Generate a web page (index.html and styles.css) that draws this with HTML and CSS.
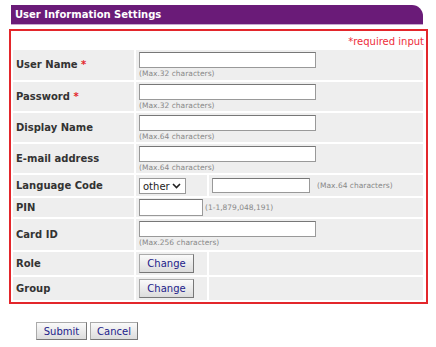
FILE: index.html
```html
<!DOCTYPE html>
<html lang="en">
<head>
  <meta charset="UTF-8" />
  <title>User Information Settings</title>
  <link rel="stylesheet" href="styles.css">
</head>
<body>
  <div class="page">
    <div class="title-bar">User Information Settings</div>
    <div class="form-box">
      <div class="required-note">*required input</div>
      <table class="settings">
        <tr class="tall first-row">
          <th>User Name <span class="req">*</span></th>
          <td colspan="2">
            <input type="text" class="field">
            <div class="hint">(Max.32 characters)</div>
          </td>
        </tr>
        <tr class="tall">
          <th>Password <span class="req">*</span></th>
          <td colspan="2">
            <input type="password" class="field">
            <div class="hint">(Max.32 characters)</div>
          </td>
        </tr>
        <tr class="tall">
          <th>Display Name</th>
          <td colspan="2">
            <input type="text" class="field">
            <div class="hint">(Max.64 characters)</div>
          </td>
        </tr>
        <tr class="tall">
          <th>E-mail address</th>
          <td colspan="2">
            <input type="text" class="field">
            <div class="hint">(Max.64 characters)</div>
          </td>
        </tr>
        <tr class="short">
          <th>Language Code</th>
          <td class="col-mid">
            <span class="select-wrap">
              <select class="lang">
                <option>other</option>
              </select>
              <svg class="chevron" width="9" height="6" viewBox="0 0 9 6"><path d="M1 1 L4.5 4.5 L8 1" fill="none" stroke="#222" stroke-width="1.6"/></svg>
            </span>
          </td>
          <td class="col-last">
            <input type="text" class="field field-mid">
            <span class="hint inline">(Max.64 characters)</span>
          </td>
        </tr>
        <tr class="short pin-row">
          <th>PIN</th>
          <td colspan="2">
            <input type="text" class="field field-pin"><span class="hint inline">(1-1,879,048,191)</span>
          </td>
        </tr>
        <tr class="tall card-row">
          <th>Card ID</th>
          <td colspan="2">
            <input type="text" class="field">
            <div class="hint">(Max.256 characters)</div>
          </td>
        </tr>
        <tr class="btn-row">
          <th>Role</th>
          <td class="col-mid"><button type="button" class="btn">Change</button></td>
          <td class="col-last"></td>
        </tr>
        <tr class="btn-row">
          <th>Group</th>
          <td class="col-mid"><button type="button" class="btn">Change</button></td>
          <td class="col-last"></td>
        </tr>
      </table>
    </div>
    <div class="actions">
      <button type="submit" class="btn btn-submit">Submit</button>
      <button type="button" class="btn btn-cancel">Cancel</button>
    </div>
  </div>
</body>
</html>
```

FILE: styles.css
```css
:root {
  --purple: #6a1b78;
  --red: #e3262b;
  --cell-bg: #eeeeee;
  --label-color: #333;
  --hint-color: #888;
}

* {
  box-sizing: border-box;
  margin: 0;
  padding: 0;
}

body {
  font-family: 'DejaVu Sans', Verdana, sans-serif;
  background: #fff;
  color: var(--label-color);
}

.page {
  padding: 5px 8px 0 9px;
}

.title-bar {
  margin: 0 5px 0 2px;
  height: 20px;
  background: var(--purple);
  color: #fff;
  font-size: 10px;
  font-weight: bold;
  line-height: 19px;
  padding-left: 4px;
  border-top-right-radius: 11px;
  border-bottom: 1px solid #c8a8d0;
}

.form-box {
  margin-top: 4px;
  width: 419px;
  border: 2px solid var(--red);
}

.required-note {
  height: 17px;
  text-align: right;
  color: #ee2d3a;
  font-size: 10px;
  line-height: 22px;
  padding-right: 2px;
}

.settings {
  width: 414px;
  border-collapse: separate;
  border-spacing: 2px;
}

.settings th,
.settings td {
  background: var(--cell-bg);
  vertical-align: top;
  line-height: 12px;
}

.settings th {
  width: 121px;
  text-align: left;
  font-size: 10px;
  font-weight: bold;
  color: var(--label-color);
  padding-left: 3px;
  vertical-align: middle;
}

.settings td {
  padding: 2px 3px 0;
}

.col-mid {
  width: 71px;
}

.tall th,
.tall td {
  height: 29px;
}

.first-row th,
.first-row td {
  height: 30px;
}

.card-row th,
.card-row td {
  height: 31px;
}

.short th,
.short td {
  height: 21px;
}

.short td {
  padding-top: 3px;
}

.pin-row th,
.pin-row td {
  height: 19px;
}

.pin-row td {
  padding-top: 1px;
}

.btn-row th,
.btn-row td {
  height: 23px;
}

.req {
  color: var(--red);
}

.field {
  display: block;
  width: 177px;
  height: 16px;
  border: 1px solid #999;
  border-top-color: #777;
  background: #fff;
  font-size: 10px;
}

.field-mid {
  display: inline-block;
  width: 98px;
  height: 15px;
  vertical-align: middle;
}

.field-pin {
  display: inline-block;
  width: 64px;
  height: 17px;
  vertical-align: middle;
}

.hint {
  font-size: 7.5px;
  line-height: 8px;
  color: var(--hint-color);
  margin-top: 2px;
}

.hint.inline {
  display: inline-block;
  margin: 0 0 0 2px;
  vertical-align: middle;
}

.select-wrap {
  position: relative;
  display: inline-block;
  vertical-align: middle;
}

.lang {
  display: block;
  appearance: none;
  -webkit-appearance: none;
  width: 47px;
  height: 16px;
  border: 1px solid #999;
  background: #fff;
  font-family: 'DejaVu Sans', Verdana, sans-serif;
  font-size: 10px;
  color: #222;
  padding-left: 3px;
  border-radius: 0;
}

.chevron {
  position: absolute;
  right: 5px;
  top: 5px;
  pointer-events: none;
}

.btn {
  height: 19px;
  padding: 0 6px;
  font-family: 'DejaVu Sans', Verdana, sans-serif;
  font-size: 10px;
  color: #22228a;
  background: linear-gradient(#fafafa, #dcdcdc);
  border: 1px solid #aaa;
  border-right-color: #777;
  border-bottom-color: #777;
  cursor: pointer;
}

.settings .btn {
  display: block;
  width: 55px;
}

.actions {
  padding: 18px 0 0 27px;
  display: flex;
  gap: 3px;
}

.btn-submit {
  width: 51px;
  height: 18px;
}

.btn-cancel {
  width: 48px;
  height: 18px;
}
```
